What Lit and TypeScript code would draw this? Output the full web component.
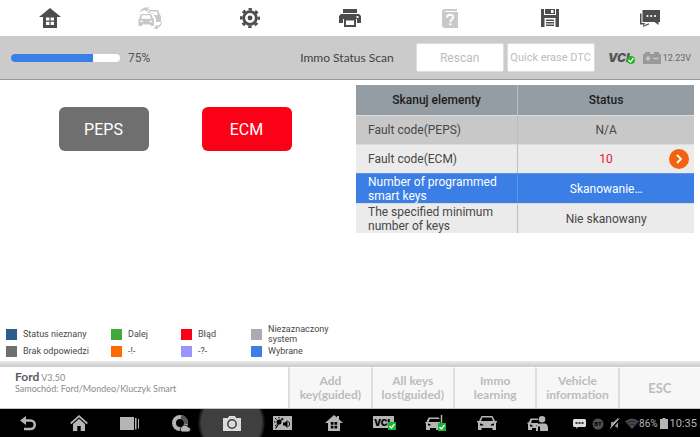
import { LitElement, html, svg, css, nothing, TemplateResult } from "lit";
import { customElement, property } from "lit/decorators.js";
import { classMap } from "lit/directives/class-map.js";
import { styleMap } from "lit/directives/style-map.js";

const icon = (w: number, h: number, body: TemplateResult) =>
  html`<svg width=${w} height=${h} viewBox="0 0 ${w} ${h}" aria-hidden="true" fill="currentColor">${body}</svg>`;

const tick = (cx: number, cy: number) => svg`<path d="M${cx - 2} ${cy}l2 2 3-4" fill="none" stroke="#fff" stroke-width="1.3"/>`;

const toolHome = icon(22, 20, svg`
  <path fill-rule="evenodd" d="M11 0 22 9H18V20H4V9H0ZM7 9.500V12.500H10.400V9.500ZM11.600 9.500V12.500H15V9.500ZM7 13.700V17H10.400V13.700ZM11.600 13.700V17H15V13.700Z"/>`);
const toolCars = icon(24, 22, svg`
  <path d="M1 6C2 3 5 .5 8 .5H12L9 2H12L8 5V3.500C5 3 3 4 1 6Z"/>
  <path d="M9 7 11.500 3H20L22 8 23 9V15H18V12L15 7Z"/>
  <path d="M12.500 4.500H18.500L20 8H16L14.500 6H11.500Z" fill="#fff"/>
  <path fill-rule="evenodd" stroke="#fff" stroke-width="1.400" paint-order="stroke" d="M3 7H13L15 11 16 12.500V19H12.500V17.500H4V19H.5V12.500L1.500 11ZM4.200 8.300 3 11.800H13L11.800 8.300ZM2.500 13.500V15H5.200L4.600 13.900ZM14 13.500V15H11.300L11.900 13.900Z"/>
  <path d="M24 14C24 18 22 20 20 20.500V22L15.500 21.500 19 17.500V19C21 18.500 22.500 17 24 14Z"/>`);
const toolGear = icon(20, 20, svg`
  <g fill="none" stroke="currentColor">
    <circle cx="10" cy="10" r="6.300" stroke-width="2.800"/>
    <circle cx="10" cy="10" r="8.700" stroke-width="2.600" stroke-dasharray="3.400 3.433" stroke-dashoffset="1.700"/>
  </g><circle cx="10" cy="10" r="2.400"/>`);
const toolPrinter = icon(22, 18, svg`
  <path d="M4 0H18V4H4Z"/>
  <path fill-rule="evenodd" d="M2 5H20L22 7V14H18V10H4V14H0V7ZM17.500 7V9H19.500V7Z"/>
  <path fill-rule="evenodd" d="M5 10H17V18H5ZM7 11.500V16H15V11.500Z"/>`);
const toolHelp = icon(16, 19, svg`
  <path d="M2 0H15V2H3V3H16V19H2L0 17V2Z"/>
  <path d="M5 8.500C5 4.800 11.300 5 11.300 8.300 11.300 10.600 8.300 10.500 8.300 13" fill="none" stroke="#fff" stroke-width="2"/>
  <path d="M7.200 14.300h2.200v2H7.200z" fill="#fff"/>`);
const toolSave = icon(18, 18, svg`
  <path fill-rule="evenodd" d="M0 0H3V6H15V0H18V18H0ZM3.500 9V18H14.500V9Z"/>
  <path fill-rule="evenodd" d="M4 0H14V5H4ZM10 1V4H12.500V1Z"/>
  <path d="M5 10.500H13V12H5ZM5 13H13V14.500H5ZM5 15.500H13V17H5Z"/>`);
const toolChat = icon(20, 17, svg`
  <path d="M0 3.500H1.500V13H5L4 15.500 8 13.500H9V14.500L3 17 3.500 14.500H0Z"/>
  <path d="M2.500 0H20V12H18.500V15L14.500 12H2.500Z"/>
  <g fill="#fff"><circle cx="7.500" cy="6" r="1.100"/><circle cx="11.200" cy="6" r="1.100"/><circle cx="15" cy="6" r="1.100"/></g>`);

const vciLogo = html`<svg width="28" height="14" viewBox="0 0 28 14" role="img" aria-label="VCI">
  <text x="0" y="11" class="vci">VCI</text>
  <circle cx="23" cy="9" r="4" fill="#1db81d"/>${tick(22.500, 9)}</svg>`;
const battery = icon(18, 12, svg`
  <path d="M2 0H7V2H11V0H16V2H18V12H0V2H2Z"/>
  <path d="M2.500 6.500H7.500M5 4V9M10.500 6.500H15.500" stroke="#ccc" stroke-width="1.500"/>`);

const navBack = icon(16, 15, svg`
  <path d="M0 4.500 6 0V9Z"/><path d="M5 4.500H10.500A4.200 4.200 0 0 1 10.500 13H4" fill="none" stroke="currentColor" stroke-width="2.500"/>`);
const navHome = icon(18, 16, svg`
  <path d="M.7 8.500 9 1.200 17.300 8.500" fill="none" stroke="currentColor" stroke-width="1.700"/>
  <path d="M3 9 9 3.700 15 9V16H10.700V11H7.300V16H3Z"/>`);
const navRecent = icon(20, 13, svg`<path d="M0 0H14V13H0ZM15 1H16.500V12.500H15ZM18 2H19V11.500H18Z"/>`);
const navBrowser = icon(20, 17, svg`
  <circle cx="9" cy="8" r="6" fill="none" stroke="currentColor" stroke-width="4"/>
  <path d="M10 2A6 6 0 0 1 15 9" fill="none" stroke="#555" stroke-width="4"/>
  <path d="M11 17A3 3 0 0 1 11 11.500 3.500 3.500 0 0 1 17 12 2.500 2.500 0 0 1 17 17Z" stroke="#000" stroke-width=".8"/>`);
const navCamera = icon(18, 15, svg`
  <path d="M0 2H5L6 0H12L13 2H18V15H0Z"/><circle cx="9" cy="8" r="4.200" fill="none" stroke="#3f3f3f" stroke-width="1.500"/>`);
const navDisplay = icon(19, 14, svg`
  <path d="M0 0H19V14H0Z"/><path d="M2.500 12.500 9.500 2" stroke="#000" stroke-width="1.200"/>
  <circle cx="6" cy="6" r="2.500" fill="#000"/>
  <path d="M1 6H2.500M2 2 3.500 3.500M6 1V2.500M9 4 10.500 3M2 10 3.500 8.500" stroke="#000"/>
  <path d="M10 6.500H12L14.500 4V12L12 9.500H10Z" fill="#000"/><path d="M15.700 5.500Q17.700 8 15.700 10.500" fill="none" stroke="#000"/>`);
const navGarage = icon(18, 16, svg`
  <path fill-rule="evenodd" d="M9 0 12 2.500V1H14V4.200L18 8H15V16H3V8H0ZM5.800 7V9.800H8.500V7ZM9.500 7V9.800H12.200V7ZM5.800 10.800V13.500H8.500V10.800ZM9.500 10.800V13.500H12.200V10.800Z"/>`);
const navVci = html`<svg width="24" height="15" viewBox="0 0 24 15" aria-hidden="true">
  <path d="M0 0H21V12H0Z" fill="#b5b5b5"/><text x="1" y="10" class="vci-small">VCI</text>
  <path d="M15 6H23V14H15Z" fill="#16b32e"/>${tick(18.500, 10)}</svg>`;
const navCarKey = html`<svg width="22" height="17" viewBox="0 0 22 17" aria-hidden="true">
  <path fill="#b5b5b5" fill-rule="evenodd" d="M3.500 2.500H14L14.500 4H5L3.500 7H15V15H11V13H5V15H1V9L0 7H1.500ZM3 8.500V10.500H6L5 8.900Z"/>
  <path d="M16.500 0V8" stroke="#b5b5b5" stroke-width="1.500"/>
  <path d="M13 8H21V16H13Z" fill="#16b32e"/>${tick(16.500, 12)}</svg>`;
const navCar = icon(20, 14, svg`
  <path fill-rule="evenodd" d="M4.500 0H15.500L18 5H20V6.500H19V14H15.500V12H4.500V14H1V6.500H0V5H2ZM5.300 1.500 4 5H16L14.700 1.500ZM3 7.500V9.500H6.500L5.500 8ZM17 7.500V9.500H13.500L14.500 8Z"/>`);
const navService = icon(22, 15, svg`
  <path fill-rule="evenodd" d="M3.500 2.500H11V4H5L4 7H11V9H9V12H5V14H1V8L0 7 2 6ZM3 8.500V10.500H6L5 8.900Z"/>
  <circle cx="15" cy="3.300" r="3.300"/>
  <path d="M9 15V11C9 8.500 11 7.500 13 7.500H17C20 7.500 21 9.500 21 12V15H13V11L12 10 11 11V15Z"/>`);

const sysChat = icon(13, 10, svg`<path d="M1 0H12L13 1V7L12 8H5L3.500 10V8H1L0 7V1Z"/><path d="M2.500 4H4.500M5.500 4H7.500M8.500 4H10.500" stroke="#000" stroke-width="1.500"/>`);
const sysBt = html`<svg width="12" height="12" viewBox="0 0 12 12" aria-hidden="true"><circle cx="6" cy="6" r="5.500" fill="#515151"/><text x="6" y="8" text-anchor="middle" class="bt">BT</text></svg>`;
const sysMute = icon(10, 11, svg`<path d="M1 4H3.500L8 0V10L4.500 8H1Z" fill="#999"/><path d="M1 11 9.500 1" stroke="#000" stroke-width="2"/><path d="M0 10.500 9 .5" stroke="currentColor"/>`);
const sysWifi = html`<svg width="14" height="11" viewBox="0 0 14 11" aria-hidden="true"><path d="M0 3.500Q7-2.500 14 3.500L7 11Z" fill="#4a4a4a"/><path d="M2 5Q7 1.500 12 5M4 7Q7 5 10 7" fill="none" stroke="#222"/></svg>`;
const sysBattery = icon(8, 11, svg`<path d="M2.500 0H5.500V1H8V11H0V1H2.500Z"/>`);

interface ScanRow { label: string; status: string; tone?: "muted" | "active"; fault?: boolean }

@customElement("scan-table")
export class ScanTable extends LitElement {
  @property({ attribute: false }) rows: ScanRow[] = [];

  static styles = css`
    :host { display: block; }
    table { width: 100%; border-collapse: separate; border-spacing: 0; table-layout: fixed; font-size: 12px; line-height: 14px; color: #474747; }
    .first { width: 48%; }
    th, td { height: 30px; padding: 0 12px; box-sizing: border-box; }
    th { background: #959da4; color: #1b1b1b; font-weight: 500; text-align: center; }
    td { height: 29px; border-top: 1px solid #dcdcdc; }
    th.first, .label { border-right: 1px solid #b9bec2; }
    .label { text-align: left; }
    .status { text-align: center; position: relative; }
    tbody tr { background: #ebebeb; }
    tr.muted { background: #c8c8c8; }
    tr.active { background: #3a7ee6; color: #fff; }
    tr.active td { border-color: #5b93ea; }
    .fault { color: #e8182d; }
    .more { position: absolute; right: 5px; top: 4px; width: 20px; height: 20px; padding: 0; border: 0; border-radius: 50%; background: #f3620c; color: #fff; display: grid; place-items: center; }
    tr.wrapped td { height: 30px; }
  `;

  render() {
    return html`<table>
      <thead><tr><th class="first" scope="col">Skanuj elementy</th><th scope="col">Status</th></tr></thead>
      <tbody>${this.rows.map((r) => html`
        <tr class=${classMap({ muted: r.tone === "muted", active: r.tone === "active", wrapped: r.label.length > 20 })}>
          <td class="label">${r.label}</td>
          <td class="status"><span class=${classMap({ fault: !!r.fault })}>${r.status}</span>${r.fault
            ? html`<button class="more" aria-label="Details">${icon(6, 10, svg`<path d="M1 1 5 5 1 9" fill="none" stroke="currentColor" stroke-width="1.800"/>`)}</button>`
            : nothing}</td>
        </tr>`)}</tbody>
    </table>`;
  }
}

@customElement("app-root")
export class AppRoot extends LitElement {
  private progress = 75;

  private tools = [
    { name: "Home", art: toolHome }, { name: "Vehicle", art: toolCars, off: true },
    { name: "Settings", art: toolGear }, { name: "Print", art: toolPrinter },
    { name: "Help", art: toolHelp, off: true }, { name: "Save", art: toolSave },
    { name: "Messages", art: toolChat },
  ];

  private rows: ScanRow[] = [
    { label: "Fault code(PEPS)", status: "N/A", tone: "muted" },
    { label: "Fault code(ECM)", status: "10", fault: true },
    { label: "Number of programmed smart keys", status: "Skanowanie…", tone: "active" },
    { label: "The specified minimum number of keys", status: "Nie skanowany" },
  ];

  private legend = [
    ["#2e5d8d", "Status nieznany"], ["#40a83c", "Dalej"], ["#fc0018", "Błąd"], ["#a9acb5", "Niezaznaczony system"],
    ["#6f6f6f", "Brak odpowiedzi"], ["#ff6a00", "-!-"], ["#9b94ff", "-?-"], ["#3a7ee6", "Wybrane"],
  ];

  private actions = ["Add key(guided)", "All keys lost(guided)", "Immo learning", "Vehicle information", "ESC"];

  private nav = [
    ["Back", navBack], ["Home screen", navHome], ["Recent apps", navRecent], ["Browser", navBrowser],
    ["Screenshot", navCamera], ["Display and sound", navDisplay], ["Garage", navGarage], ["VCI", navVci],
    ["Vehicle keys", navCarKey], ["Vehicle", navCar], ["Service", navService],
  ] as [string, TemplateResult][];

  static styles = css`
    :host { display: flex; flex-direction: column; min-height: 100vh; background: #fff; color: #474747; font-family: Roboto, "Noto Sans", sans-serif; }
    button { font-family: inherit; margin: 0; }
    svg { display: block; flex: none; }
    .tools { display: grid; grid-template-columns: repeat(7, 1fr); height: 36px; }
    .tool { border: 0; padding: 0; background: none; color: #4d4d4d; display: grid; place-items: center; }
    .tool.off { color: #c9c9c9; }
    .status-bar { display: flex; align-items: center; height: 44px; box-sizing: border-box; padding: 0 9px 0 11px; background: #cbcbcb; border-bottom: 1px solid #999; }
    .track { width: 109px; height: 8px; border-radius: 4px; overflow: hidden; background: #fff; }
    .bar { height: 100%; background: #3a7ee6; }
    .percent { margin-left: 8px; font-size: 12px; color: #555; }
    .title { margin-left: auto; font: 12px Lato, sans-serif; color: #424242; }
    .actions { display: flex; gap: 3px; margin-left: 22px; }
    .action { width: 88px; height: 29px; padding: 0; background: #fff; border: 1px solid #ddd; border-radius: 2px; font-size: 12px; color: #bdbdbd; white-space: nowrap; }
    .action.long { font-size: 11px; }
    .link { margin-left: 13px; }
    .vci { font: italic 900 12px Inter, sans-serif; fill: #555; }
    .power { display: flex; align-items: center; gap: 2px; margin-left: 7px; font-size: 9px; color: #666; }
    .power svg { color: #999; }
    main { flex: 1; display: grid; grid-template-columns: 1fr 1fr; }
    .modules { display: flex; flex-direction: column; justify-content: space-between; padding: 27px 0 3px; }
    .units { display: flex; justify-content: center; gap: 53px; }
    .unit { width: 90px; height: 44px; padding: 0; border: 0; border-radius: 6px; background: #6f6f6f; color: #fff; font-size: 16px; }
    .unit.fault { background: #fc0018; }
    .legend { display: grid; grid-template-columns: 105px 70px 70px 1fr; grid-template-rows: 20px 14px; margin: 0; padding: 0 12px 0 6px; list-style: none; font-size: 9px; line-height: 10px; }
    .entry { display: flex; align-items: center; gap: 6px; }
    .entry:nth-child(4) span { max-width: 70px; }
    .swatch { width: 11px; height: 11px; flex: none; }
    .results { padding: 5px 6px 0; }
    footer { display: flex; height: 48px; box-sizing: border-box; padding-top: 6px; background: linear-gradient(#e9e9e9, #cacaca) 0 0 / 100% 6px no-repeat; border-bottom: 1px solid #c4c4c4; font-family: Lato, sans-serif; }
    .vehicle { flex: 7 1 0; box-sizing: border-box; min-width: 0; font-size: 9px; line-height: 10px; color: #8b8b8b; }
    .make { margin: 0; padding: 3px 0 0 15px; line-height: 13px; }
    .make strong { font-size: 12px; color: #5b5b5b; }
    .path { margin: 0; padding-left: 15px; }
    .commands { flex: 10 1 0; display: grid; grid-template-columns: repeat(5, 1fr); }
    .command { border: 0; border-left: 2px solid #dedede; border-top: 1px solid #fff; padding: 0 4px; background: #f7f7f7; color: #bcbcbc; font-size: 12px; font-weight: 700; line-height: 14px; }
    .command:last-child { font-size: 13px; }
    nav { display: flex; align-items: stretch; height: 28px; padding: 0 3px 0 2px; background: #000; color: #b5b5b5; }
    .keys { flex: 561 1 0; display: grid; grid-template-columns: repeat(11, 1fr); }
    .key { border: 0; padding: 0; background: none; color: inherit; display: grid; place-items: center; }
    .key.pressed { background: radial-gradient(circle, #3f3f3f 30px, transparent 34px); margin: 0 -8px; color: #dcdcdc; }
    .vci-small { font: 900 9px Inter, sans-serif; fill: #000; }
    .system { flex: 134 1 0; display: flex; align-items: center; justify-content: flex-end; font-size: 10px; white-space: nowrap; padding-top: 1px; }
    .notices { display: flex; align-items: center; gap: 6px; margin-right: 5px; color: #ddd; }
    .bt { font: 700 6px Roboto, sans-serif; fill: #000; }
    .charge { margin-right: 2px; }
    .clock { margin-left: 2px; font-size: 11px; }
  `;

  render() {
    return html`
      <header>
        <div class="tools">${this.tools.map((t) => html`
          <button class=${classMap({ tool: true, off: !!t.off })} aria-label=${t.name} ?disabled=${!!t.off}>${t.art}</button>`)}
        </div>
        <div class="status-bar">
          <div class="track" role="progressbar" aria-label="Scan progress" aria-valuenow=${this.progress}>
            <div class="bar" style=${styleMap({ width: `${this.progress}%` })}></div>
          </div>
          <span class="percent">${this.progress}%</span>
          <span class="title">Immo Status Scan</span>
          <div class="actions">
            <button class="action" disabled>Rescan</button>
            <button class="action long" disabled>Quick erase DTC</button>
          </div>
          <span class="link">${vciLogo}</span>
          <span class="power">${battery}12.23V</span>
        </div>
      </header>
      <main>
        <section class="modules">
          <div class="units"><button class="unit">PEPS</button><button class="unit fault">ECM</button></div>
          <ul class="legend">${this.legend.map(([color, text]) => html`
            <li class="entry"><i class="swatch" style=${styleMap({ background: color })}></i><span>${text}</span></li>`)}
          </ul>
        </section>
        <section class="results"><scan-table .rows=${this.rows}></scan-table></section>
      </main>
      <footer>
        <div class="vehicle">
          <p class="make"><strong>Ford</strong> V3.50</p>
          <p class="path">Samochód: Ford/Mondeo/Kluczyk Smart</p>
        </div>
        <div class="commands">${this.actions.map((a) => html`<button class="command" disabled>${a}</button>`)}</div>
      </footer>
      <nav>
        <div class="keys">${this.nav.map(([name, art]) => html`
          <button class=${classMap({ key: true, pressed: name === "Screenshot" })} aria-label=${name}>${art}</button>`)}
        </div>
        <div class="system">
          <span class="notices">${sysChat}${sysBt}${sysMute}</span>
          ${sysWifi}<span class="charge">86%</span>${sysBattery}<span class="clock">10:35</span>
        </div>
      </nav>`;
  }
}
